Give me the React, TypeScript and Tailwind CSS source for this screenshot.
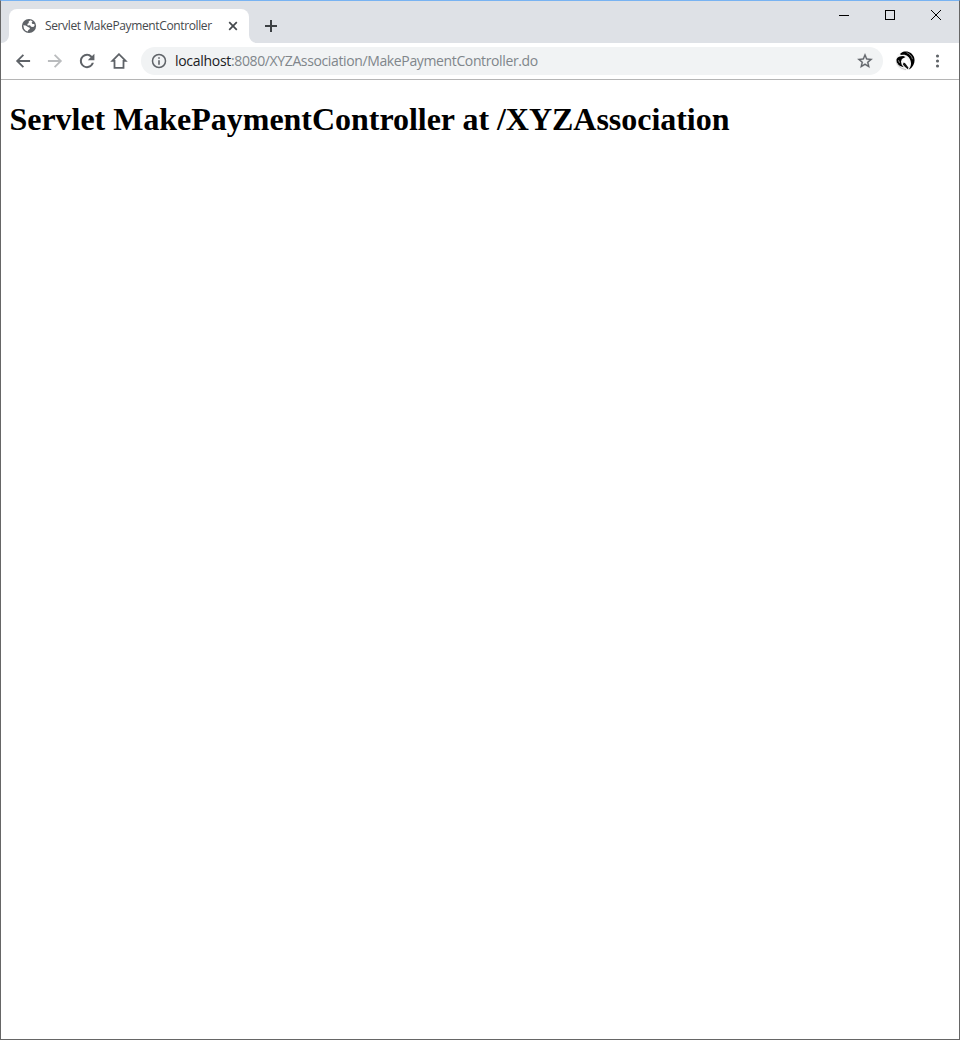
import React from "react";

type IconProps = { d: string; className: string; box?: string };

function Glyph({ d, className, box = "0 0 24 24" }: IconProps) {
  return (
    <svg viewBox={box} fill="currentColor" className={className} aria-hidden="true">
      <path d={d} />
    </svg>
  );
}

const BACK = "M20.5 10.8H7.83l5.4-5.4L11.7 3.8 3.5 12l8.2 8.2 1.53-1.6-5.4-5.4H20.5v-2.4z";
const FORWARD = "M12.3 3.8l-1.53 1.6 5.4 5.4H3.5v2.4h12.67l-5.4 5.4 1.53 1.6 8.2-8.2z";
const RELOAD =
  "M18.1 6A8.6 8.6 0 0 0 12 3.4a8.6 8.6 0 1 0 8.3 10.8h-2.6A6.2 6.2 0 0 1 12 18.2a6.2 6.2 0 1 1 0-12.4c1.7 0 3.2.7 4.3 1.8L13 11h7.9V3.2L18.1 6z";
const INFO =
  "M10.9 17h2.2v-6h-2.2v6zm0-8h2.2V6.8h-2.2V9zM12 2a10 10 0 1 0 0 20 10 10 0 0 0 0-20zm0 17.9a7.9 7.9 0 1 1 0-15.8 7.9 7.9 0 1 1 0 15.8z";
const STAR =
  "M22 9.24l-7.19-.62L12 2 9.19 8.63 2 9.24l5.46 4.73L5.82 21 12 17.27 18.18 21l-1.63-7.03L22 9.24zM12 15.4l-3.76 2.27 1-4.28-3.32-2.88 4.38-.38L12 6.1l1.71 4.04 4.38.38-3.32 2.88 1 4.28L12 15.4z";

function Favicon() {
  return (
    <svg viewBox="0 0 16 16" className="ml-3 size-4 shrink-0">
      <circle cx="8" cy="8" r="7.1" fill="#5f6368" />
      <path
        d="M9.6 2.3 7.6 3.5 7.8 4.9 6.3 6 6.7 7.5 9 7.2 10.1 8.7 12.3 8.9 13.6 7.8 13.3 6.1 11.5 6 10.6 4.7 11.6 3.4ZM2.3 7.3 4.7 7.5 7 9.1 8.7 9.7 8.9 11.1 7.3 12.1 6.8 13.6 4.7 12.8 3 10.8Z"
        fill="#fff"
      />
    </svg>
  );
}

function Avatar() {
  return (
    <svg viewBox="0 0 20 20" className="size-5 shrink-0">
      <circle cx="10" cy="10" r="9.6" fill="#f6f6f6" />
      <path d="M9.5.5C14-.2 17.6 2.4 19 6c1.5 4.5-.2 9.3-4 11.9l-1.4.6c1.6-2 2.6-4 2.4-6.5-.2-2.8-1.4-5.2-3.4-6.8C11 3.9 9.2 3.4 6.8 3.9L4.9 3.3C6 1.8 7.6.8 9.5.5Z" fill="#000" />
      <path d="M11.6 1.6c2.9 1 5.2 3.4 5.9 6.6" fill="none" stroke="#999" strokeWidth=".8" />
      <path d="M8.2 4.9C5 4.9 2.4 6 1.5 8.2c-.4 2.5 1 5.2 3.6 6.9l3.6 1.2-2.1-2.8L6 10.4l.9-2.4 3.6-2Z" fill="#000" />
      <path d="M8.6 11.6 10 11.9 13.5 16.8 12.8 18.2 9.8 15.8 7.9 13.4Z" fill="#111" />
      <path d="M8 8 9.9 6.9 12.4 8 12.3 10.4 15 14.7 13.6 15.5 10 11.4 8.5 11.2Z" fill="#fff" />
      <path d="M3.5 9.2 4.5 11.8M1.1 10.8 3.3 14.7 6.8 17.4 11 18.7" fill="none" stroke="#bbb" strokeWidth=".8" />
    </svg>
  );
}

function TabStrip() {
  return (
    <div className="flex h-[42px] items-start bg-[#dee1e6]">
      <svg viewBox="0 0 8 8" className="h-2 w-2 shrink-0 self-end">
        <path d="M0 8a8 8 0 0 0 8-8v8z" fill="#fff" />
      </svg>
      <div className="mt-2 flex h-[34px] w-60 shrink-0 items-center rounded-t-lg bg-white">
        <Favicon />
        <span className="ml-2 w-[184px] whitespace-nowrap font-['Open_Sans',sans-serif] text-[12px] leading-4 tracking-[-0.37px] text-[#45494d]">
          Servlet MakePaymentController
        </span>
        <svg viewBox="0 0 10 10" className="mr-[11px] size-[10px] shrink-0">
          <path d="M1.2 1.2 8.8 8.8M8.8 1.2 1.2 8.8" stroke="#45494d" strokeWidth="1.7" />
        </svg>
      </div>
      <svg viewBox="0 0 8 8" className="h-2 w-2 shrink-0 self-end">
        <path d="M0 0a8 8 0 0 0 8 8H0z" fill="#fff" />
      </svg>
      <svg viewBox="0 0 12 12" className="ml-2 mt-[19px] size-3 shrink-0">
        <path d="M6 0v12M0 6h12" stroke="#3c4043" strokeWidth="2" />
      </svg>
      <div className="ml-auto flex items-start">
        <svg viewBox="0 0 46 29" className="h-[29px] w-[46px]" shapeRendering="crispEdges">
          <path d="M18 14.5h10" stroke="#000" />
        </svg>
        <svg viewBox="0 0 46 29" className="h-[29px] w-[46px]" shapeRendering="crispEdges">
          <path d="M18.5 9.5h9v9h-9z" fill="none" stroke="#000" />
        </svg>
        <svg viewBox="0 0 46 29" className="h-[29px] w-[46px]">
          <path d="m18 9 10 10m0-10-10 10" stroke="#000" />
        </svg>
      </div>
    </div>
  );
}

function Toolbar() {
  return (
    <div className="flex h-[37px] items-center border-b border-[#b5b5b5] bg-white text-[#5f6368]">
      <Glyph d={BACK} className="ml-3 size-5" />
      <Glyph d={FORWARD} className="ml-3 size-5 text-[#babcbe]" />
      <Glyph d={RELOAD} className="ml-3 size-5" />
      <svg viewBox="0 0 20 20" className="ml-3 size-5">
        <path d="M10 3.2 3.4 9.8h2.1v7.1h9V9.8h2.1Z" fill="none" stroke="currentColor" strokeWidth="1.8" />
      </svg>
      <div className="ml-3 flex h-7 w-[742px] items-center rounded-full bg-[#f1f3f4]">
        <Glyph d={INFO} className="ml-[10px] size-4" box="1 1 22 22" />
        <span className="ml-2 whitespace-nowrap font-['Open_Sans',sans-serif] text-[14px] leading-5 tracking-[-0.37px] text-[#80868b]">
          <span className="tracking-[-0.3px] text-[#202124]">localhost</span>:8080/XYZAssociation/MakePaymentController.do
        </span>
        <Glyph d={STAR} className="ml-auto mr-[9px] size-[18px] stroke-current stroke-[0.4]" />
      </div>
      <div className="ml-3">
        <Avatar />
      </div>
      <svg viewBox="0 0 5 14" className="ml-5 h-[14px] w-[5px] fill-current">
        <circle cx="2.5" cy="2" r="1.55" />
        <circle cx="2.5" cy="7" r="1.55" />
        <circle cx="2.5" cy="12" r="1.55" />
      </svg>
    </div>
  );
}

export default function App() {
  return (
    <div className="flex h-[1040px] w-[960px] flex-col overflow-hidden border border-[#666] border-t-[#78b3f2] bg-white">
      <TabStrip />
      <Toolbar />
      <main className="px-[8.5px] pt-[21px]">
        <h1 className="whitespace-nowrap font-['Liberation_Serif',serif] text-[32px] font-bold leading-[37px] tracking-[-0.03px] text-black">
          Servlet MakePaymentController at /XYZAssociation
        </h1>
      </main>
    </div>
  );
}
